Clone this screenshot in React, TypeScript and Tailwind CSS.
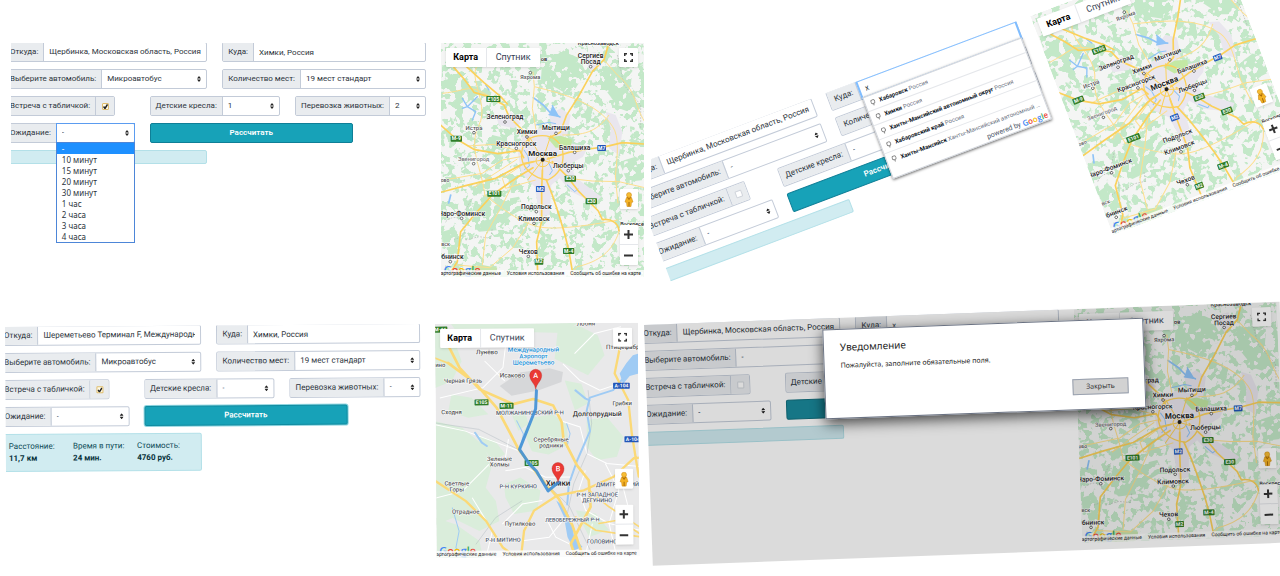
import React from 'react';

interface Trip {
  from: string;
  to: string;
  car: string;
  seats: string;
  withSign: boolean;
  childSeats: string;
  pets: string;
  waiting: string;
}

interface Quote {
  label: string;
  value: string;
}

interface MapLabel {
  text: string;
  x: number;
  y: number;
  size?: number;
  color?: string;
  bold?: boolean;
  dot?: number;
}

interface Shield {
  text: string;
  x: number;
  y: number;
  blue?: boolean;
}

const WAITING_OPTIONS = ['-', '10 минут', '15 минут', '20 минут', '30 минут', '1 час', '2 часа', '3 часа', '4 часа'];

const SUGGESTIONS = [
  { main: 'Хабаровск', rest: 'Россия' },
  { main: 'Химки', rest: 'Россия' },
  { main: 'Ханты-Мансийский автономный округ', rest: 'Россия' },
  { main: 'Хабаровский край', rest: 'Россия' },
  { main: 'Ханты-Мансийск', rest: 'Ханты-Мансийский автономный округ, Россия' },
];

const QUOTE: Quote[] = [
  { label: 'Расстояние:', value: '11,7 км' },
  { label: 'Время в пути:', value: '24 мин.' },
  { label: 'Стоимость:', value: '4760 руб.' },
];

const EMPTY_TRIP: Trip = {
  from: 'Щербинка, Московская область, Россия',
  to: 'х',
  car: '-',
  seats: '-',
  withSign: false,
  childSeats: '-',
  pets: '-',
  waiting: '-',
};

const REGION_LABELS: MapLabel[] = [
  { text: 'Краснозаводск', x: 488, y: 31, size: 17 },
  { text: 'Сергиев', x: 465, y: 69 },
  { text: 'Посад', x: 465, y: 88, dot: 95 },
  { text: 'ов', x: 325, y: 79, size: 17 },
  { text: 'Яхрома', x: 284, y: 131, size: 17, color: '#555', dot: 113 },
  { text: 'Зеленоград', x: 208, y: 252, dot: 261 },
  { text: 'Истра', x: 115, y: 286, size: 18, color: '#555', dot: 293 },
  { text: 'Химки', x: 274, y: 297, dot: 306 },
  { text: 'Мытищи', x: 361, y: 285, dot: 295 },
  { text: 'Красногорск', x: 242, y: 332, dot: 340 },
  { text: 'Балашиха', x: 417, y: 344, dot: 352 },
  { text: 'Москва', x: 321, y: 363, size: 24, bold: true },
  { text: 'Звенигород', x: 114, y: 379, size: 17, color: '#777', dot: 386 },
  { text: 'Люберцы', x: 398, y: 399, dot: 407 },
  { text: 'ово', x: 28, y: 441, size: 15, color: '#555' },
  { text: 'Наро-Фоминск', x: 78, y: 542, dot: 550 },
  { text: 'Подольск', x: 302, y: 523, dot: 530 },
  { text: 'Климовск', x: 295, y: 558, dot: 565 },
  { text: 'Воскресенск', x: 602, y: 573, size: 16 },
  { text: 'вск', x: 30, y: 633, size: 16, color: '#555' },
  { text: 'Обнинск', x: 44, y: 672, dot: 680 },
  { text: 'Чехов', x: 278, y: 656, dot: 664 },
];

const REGION_SHIELDS: Shield[] = [
  { text: 'E105', x: 173, y: 192 },
  { text: 'М-9', x: 62, y: 311 },
  { text: 'М7', x: 498, y: 339, blue: true },
  { text: 'E30', x: 404, y: 431 },
  { text: 'М2', x: 314, y: 462, blue: true },
  { text: 'E101', x: 176, y: 476 },
  { text: 'E30', x: 467, y: 499 },
  { text: 'М-4', x: 399, y: 648 },
  { text: 'М2', x: 310, y: 680 },
];

const ROUTE_LABELS: MapLabel[] = [
  { text: 'Лобня', x: 465, y: 46, size: 19, color: '#555' },
  { text: 'Птицефабр', x: 575, y: 117, size: 19, color: '#555' },
  { text: 'Лунёво', x: 167, y: 130, size: 19, color: '#555' },
  { text: 'Международный', x: 307, y: 123, size: 19, color: '#1a8fd6' },
  { text: 'Аэропорт', x: 307, y: 143, size: 19, color: '#1a8fd6' },
  { text: 'Шереметьево', x: 307, y: 162, size: 19, color: '#1a8fd6' },
  { text: 'ино', x: 27, y: 167, size: 18, color: '#555' },
  { text: 'Исаково', x: 243, y: 200, size: 19, color: '#555' },
  { text: 'Черная Грязь', x: 95, y: 215, size: 18, color: '#555' },
  { text: 'Сходня', x: 60, y: 309, size: 18, color: '#555' },
  { text: 'Грибки', x: 572, y: 286, size: 18, color: '#555' },
  { text: 'МОЛЖАНИНОВСКИЙ Р-Н', x: 295, y: 312, size: 17, color: '#4a5568' },
  { text: 'Долгопрудный', x: 497, y: 318, size: 21, color: '#333' },
  { text: 'Серебряные', x: 358, y: 393, size: 18, color: '#555' },
  { text: 'родники', x: 358, y: 411, size: 18, color: '#555' },
  { text: 'Зеленые', x: 203, y: 450, size: 18, color: '#555' },
  { text: 'Холмы', x: 203, y: 467, size: 18, color: '#555' },
  { text: 'Светлые', x: 74, y: 523, size: 18, color: '#555' },
  { text: 'Горы', x: 74, y: 541, size: 18, color: '#555' },
  { text: 'Р-Н КУРКИНО', x: 258, y: 533, size: 17, color: '#4a5568' },
  { text: 'Химки', x: 378, y: 526, size: 24, color: '#222' },
  { text: 'ДМИТРОВСКИЙ', x: 556, y: 529, size: 17, color: '#4a5568' },
  { text: 'Р-Н ЗАПАДНОЕ', x: 495, y: 559, size: 17, color: '#4a5568' },
  { text: 'ДЕГУНИНО', x: 495, y: 576, size: 17, color: '#4a5568' },
  { text: 'Отрадное', x: 100, y: 608, size: 18, color: '#555' },
  { text: 'Путилково', x: 263, y: 645, size: 18, color: '#555' },
  { text: 'ЛЕВОБЕРЕЖНЫЙ Р-Н', x: 420, y: 634, size: 16, color: '#4a5568' },
  { text: 'Р-Н МИТИНО', x: 212, y: 693, size: 17, color: '#4a5568' },
  { text: 'ГОЛОВИНСКИЙ', x: 526, y: 700, size: 17, color: '#4a5568' },
];

const ROUTE_SHIELDS: Shield[] = [
  { text: 'М-11', x: 28, y: 55 },
  { text: 'E105', x: 150, y: 274 },
  { text: 'М-11', x: 225, y: 285 },
  { text: 'E105', x: 299, y: 457 },
  { text: 'А-104', x: 570, y: 227, blue: true },
  { text: 'А-104', x: 603, y: 388, blue: true },
];

const MapTexts: React.FC<{ labels: MapLabel[]; shields: Shield[] }> = ({ labels, shields }) => (
  <g fontFamily="Roboto, sans-serif" textAnchor="middle">
    {shields.map((s) => {
      const width = s.text.length * 8 + 10;
      return (
        <g key={`${s.text}-${s.x}`}>
          <rect x={s.x - width / 2} y={s.y - 9} width={width} height={18} rx={2} fill={s.blue ? '#2155b8' : '#2e7d28'} />
          <text x={s.x} y={s.y + 5} fontSize={15} fontWeight={700} fill="#fff">{s.text}</text>
        </g>
      );
    })}
    {labels.map((l) => (
      <g key={`${l.text}-${l.x}`}>
        {l.dot && <circle cx={l.x} cy={l.dot} r={4} fill="#fff" stroke="#333" strokeWidth={2} />}
        <text
          x={l.x}
          y={l.y}
          fontSize={l.size ?? 20}
          fontWeight={l.bold ? 700 : 500}
          fill={l.color ?? '#222'}
          stroke="#fff"
          strokeWidth={3}
          paintOrder="stroke"
        >
          {l.text}
        </text>
      </g>
    ))}
  </g>
);

const RegionMap: React.FC<{ id: string }> = ({ id }) => (
  <svg className="block w-full h-full" viewBox="15 24 612 702" preserveAspectRatio="xMidYMid slice" role="img" aria-label="Карта Московской области">
    <defs>
      <filter id={`${id}-forest`} x="0" y="0" width="100%" height="100%" colorInterpolationFilters="sRGB">
        <feTurbulence type="fractalNoise" baseFrequency="0.036" numOctaves="3" seed="4" />
        <feColorMatrix values="0 0 0 0 0.765  0 0 0 0 0.91  0 0 0 0 0.785  24 0 0 0 -12" />
      </filter>
      <filter id={`${id}-clearing`} x="0" y="0" width="100%" height="100%" colorInterpolationFilters="sRGB">
        <feTurbulence type="fractalNoise" baseFrequency="0.05" numOctaves="2" seed="9" />
        <feColorMatrix values="0 0 0 0 0.957  0 0 0 0 0.96  0 0 0 0 0.957  24 0 0 0 -14" />
      </filter>
    </defs>
    <rect x="15" y="24" width="612" height="702" fill="#f4f5f4" />
    <rect x="15" y="24" width="612" height="702" filter={`url(#${id}-forest)`} />

    <g fill="#c3e8c8">
      <path d="M20 90l40 10 35 40 45 30-5 40-30-15-25 20-30-25-35 5z" />
      <path d="M320 70l60-25 50 25 20 40-30 50-30 15-35-20-40-10z" />
      <path d="M480 120l60-30 50 15-5 50 35 40-30 40-40-15-40-55-30-10z" />
      <path d="M120 490l40-15 40 20 50-10 15 35-45 25-30 40-60 5-30-30z" />
      <path d="M20 590l35-10 25 30-10 50-50-20z" />
      <path d="M550 380l50-15 25 20v50l-50 5z" />
      <path d="M170 300l40 10 15 30-35 25-40-15z" />
    </g>
    <rect x="15" y="24" width="612" height="702" filter={`url(#${id}-clearing)`} />
    <g fill="#e9e6ee">
      <path d="M262 300l50-20 60 5 30 40 55 10-15 30-35 20 10 40 80 60-20 20-70-35-35-40-25 20-5 90-30 5-15-90-40-40-10-60z" />
      <path d="M340 240l35-20 30 20-10 60-40 5z" />
      <path d="M510 230l30 10 20 50-10 70-30-20 5-60z" />
      <path d="M440 60l40-10 10 40-25 20z" />
      <path d="M180 240l50-5 25 30-20 15-45-10z" />
    </g>
    <path d="M335 308l40-6 35 12-5 22-45 2z" fill="#c3e8a4" />
    <path d="M60 708l80-18 45 8-10 28H60z" fill="#c9e6b0" />

    <g fill="none" stroke="#8ec3f7" strokeLinecap="round" strokeLinejoin="round">
      <path d="M293 188l30 22 20 22 30 14" strokeWidth={5} />
      <path d="M350 212l18 32-28-5" strokeWidth={4} fill="#8ec3f7" />
      <path d="M80 190l15 25 25 15-10 25M125 185l-30 30-15 5M150 150l10 15" strokeWidth={4} />
      <path d="M300 270l40-8 20 4M265 345l12 18 4 30-14 10M340 385l10 22-8 12M395 450l22 20 10-8" strokeWidth={3} />
      <path d="M45 480l-6 24" strokeWidth={5} />
    </g>
    <path d="M30 560c20-20 45-15 55 8s-5 40-30 45M90 615l40-10 35 5 5-30M110 490l-25 40M545 60l20 90 50 60v70" fill="none" stroke="#b5bab5" strokeWidth={2} strokeDasharray="5 4" />

    <g fill="none" stroke="#fddf8e" strokeWidth={3} strokeLinejoin="round">
      <path d="M292 110l4 45-6 65 12 70M296 155c90 22 190 50 235 120 20 30 15 80 8 150l8 80M20 175c90-10 70-30 140 8M140 80c-60 30 25 120-10 190s10 130 18 215" />
      <path d="M148 480c60 50 120 90 170 97s140-5 228-22M395 430l75 8 80 2 77 18M545 120l-40-45 10-40M545 120c60 50 50 90 82 140M255 365l-55 10-60 40-125 22M255 350l-80-22-80 5M245 372l-70 45-60 40" />
      <path d="M550 590c-20 60-60 90-125 105l-20 20M240 430l-40 80-50 90-10 90M62 690l100 8 70-60 50-80M380 300c60 0 100-5 140-60M260 390l-60 40 10 30 90-25" />
    </g>
    <g fill="none" stroke="#fbd15b" strokeWidth={5} strokeLinejoin="round" strokeLinecap="round">
      <path d="M55 98l30 34 30 40 45 13 45 25 15 35 45 45 15 28M85 88l60 55 50 42 20 22" />
      <path d="M15 270l47 42 55 32 70 12 65-10 12 22M520 24l-15 50-35 36-40 72-38 60-18 50-30 15" />
      <path d="M335 372l65-20 60-10 50-7 50-12 67 4M350 380l45 45 35 45 58 58 12 26c30-4 48 12 50 34" />
      <path d="M332 435l18 45 20 60 18 60 12 50 12 70M320 405l-2 65v90l-15 60 3 100M292 398l-52 32-70 50-50 55-45 55-10 90-25 40M15 472l75-20 90-22 75-40 40-10" />
    </g>
    <path d="M258 352c5-35 30-50 62-50s60 20 62 55-10 60-45 78c-45-5-85-40-79-83z" fill="none" stroke="#fbd15b" strokeWidth={4} />
    <g fill="none" stroke="#fbd15b" strokeWidth={3}>
      <ellipse cx="321" cy="377" rx="20" ry="18" />
      <path d="M321 375l-40-70M321 375l25-75M321 375l-60 10M321 375l-45 60M321 375v60M321 375l60 20" />
    </g>
    <circle cx="321" cy="374" r="6" fill="#222" />
    <MapTexts labels={REGION_LABELS} shields={REGION_SHIELDS} />
  </svg>
);

const RouteMarker: React.FC<{ x: number; y: number; letter: string }> = ({ x, y, letter }) => (
  <g>
    <path d={`M${x} ${y}c-2-18-18-24-18-42a18 18 0 0 1 36 0c0 18-16 24-18 42z`} fill="#ea3a34" stroke="#b3221d" strokeWidth={1} />
    <text x={x} y={y - 34} textAnchor="middle" fontFamily="Roboto, sans-serif" fontSize={22} fontWeight={500} fill="#fff">{letter}</text>
  </g>
);

const RouteMap: React.FC = () => (
  <svg className="block w-full h-full" viewBox="11 38 612 702" preserveAspectRatio="xMidYMid slice" role="img" aria-label="Маршрут до Химок">
    <rect x="11" y="38" width="620" height="702" fill="#e9e9ea" />
    <g fill="#daeddb">
      <path d="M11 60l60 30 20 60-30 60-50 20zM60 38h380l-40 30-150-5-60 20-90 10z" />
      <path d="M11 330l80 20 60 50 30 60-20 70 30 40 10 60-60 30-80-40-50 20zM130 370l60 20 30 40-40 20z" />
      <path d="M380 60l60-15 60 30 20 60-50 60-40-20-60-30z" />
      <path d="M275 360l30-40 60-8 40 30 5 60-60 30-50-10z" />
      <path d="M215 520l50-20 60 40-10 60-70 10-25-50zM465 330l60-10 50 60-20 60-60 10-30-40z" />
      <path d="M60 250l60 10 50 50-60 10-60-20zM11 620l60 20 70 50 10 50H11zM400 210l50 10 20 60-40 20z" />
      <path d="M430 600l60 10 40 50-60 20zM240 310l40-10 10 40-30 20z" />
    </g>
    <path d="M205 225l60-40 90-12 40 12-5 30-70 25-80 15z" fill="#d6d7d9" />
    <g fill="none" stroke="#fff" strokeWidth={3}>
      <path d="M11 340l90 20 160 60M225 90l-10 80-60 60-130 30M160 150l60 60M395 160l50 50 60 30 60-20M385 330l60 20 20 80 60 30 100 10" />
      <path d="M220 480l60-10 60 30 80 0M210 640l60-60 60-10M340 620l30 60 60 30M460 480l-20 60 20 60 70 40 90 20M520 460l40 80-30 100 20 90M11 560l80-20 80-80M120 560l60 100-20 80" />
      <path d="M430 130l60-60 80-20M230 385l-10 60M270 690l80-10 50-60M480 640l-20 90M560 480l30 120" />
    </g>
    <g fill="none" stroke="#9aa6b0" strokeWidth={1}>
      <path d="M11 335l130 20 120 62 60 80 90 90 70 150M470 240l10 100-15 90-40 90-20 90M130 700l60-80 80-50" />
    </g>
    <g fill="#9fcbf4">
      <path d="M565 190l20-30 20-24 20-6v60l-30 8-20 24zM372 570l25 20 20 40 8 50 25 30-25 10-20-40-10-60z" />
    </g>
    <g fill="none" stroke="#9fcbf4" strokeLinecap="round" strokeLinejoin="round">
      <path d="M575 205l-30 35-70 22-10 40 10 60-40 90-25 70-5 60M432 240l30 25 12 5M130 365l20 30 15 10" strokeWidth={6} />
      <path d="M60 590l20 70-10 50 30 30M255 330l20 40-10 45M405 340l10 30-10 40" strokeWidth={3} />
    </g>
    <g fill="none" stroke="#fbd977" strokeLinejoin="round" strokeLinecap="round">
      <path d="M45 90l40 80 60 65 100 45 60-15 60 20 25 50 5 50 40 80 35 45 5 80-60 110 20 60M50 155l80 60 65 75 65 125 60 80 60 70 40 80 30 90" strokeWidth={8} />
      <path d="M11 510l90 60 60 60 50 80 40 30M265 740l10-80 30-60 70-45 80-15 90-40 60-55 20-2M575 70l-25 120 40 80 10 100 20 130" strokeWidth={7} />
      <path d="M470 540l60 50 90 60M500 640l60-10 60 40M11 140l50 20M430 620l60 40 130 20" strokeWidth={5} />
    </g>
    <MapTexts labels={ROUTE_LABELS} shields={ROUTE_SHIELDS} />
    <path d="M315 240l-3 55-49 121 30 45 20 20 35 60 32-26" fill="none" stroke="#3f8fd6" strokeWidth={9} strokeLinejoin="round" strokeLinecap="round" opacity={0.9} />
    <RouteMarker x={313} y={236} letter="A" />
    <RouteMarker x={378} y={516} letter="B" />
  </svg>
);

const GoogleLogo: React.FC<{ className: string }> = ({ className }) => (
  <span className={`font-['Open_Sans',sans-serif] font-semibold ${className}`}>
    <span className="text-[#4285f4]">G</span>
    <span className="text-[#ea4335]">o</span>
    <span className="text-[#fbbc05]">o</span>
    <span className="text-[#4285f4]">g</span>
    <span className="text-[#34a853]">l</span>
    <span className="text-[#ea4335]">e</span>
  </span>
);

const MapView: React.FC<{ children: React.ReactNode }> = ({ children }) => (
  <section className="relative col-span-4 mt-px h-[234px] overflow-hidden font-[Roboto,sans-serif]">
    {children}
    <div className="absolute left-[5px] top-[5px] flex h-[19px] rounded-[1px] bg-white shadow-sm text-[9px] leading-[19px] text-gray-700">
      <button type="button" className="w-[41px] border-r border-gray-200 font-bold text-black">Карта</button>
      <button type="button" className="w-[53px]">Спутник</button>
    </div>
    <button type="button" aria-label="Полноэкранный режим" className="absolute right-[6px] top-[5px] flex size-[19px] items-center justify-center rounded-[1px] bg-white shadow-sm">
      <svg className="size-[9px]" viewBox="0 0 18 18" fill="none" stroke="#333" strokeWidth={3}>
        <path d="M1.500 6V1.500H6M12 1.500h4.500V6M16.500 12v4.500H12M6 16.500H1.500V12" />
      </svg>
    </button>
    <div className="absolute bottom-[12px] right-[6px] flex w-[18px] flex-col gap-4">
      <button type="button" aria-label="Просмотр улиц" className="flex h-5 items-center justify-center rounded-[1px] bg-white shadow-sm">
        <svg className="h-[15px] w-[10px]" viewBox="0 0 20 30">
          <path d="M5 11q5-3 10 0l3 9-3 1-1 8H6l-1-8-3-1z" fill="#f5b324" stroke="#c98510" strokeWidth={1} />
          <circle cx="10" cy="6" r="5" fill="#f7bd35" stroke="#c98510" strokeWidth={1} />
          <path d="M7 11l3 4 3-4M10 20v9" fill="none" stroke="#a86a08" strokeWidth={2} />
        </svg>
      </button>
      <div className="flex flex-col rounded-[1px] bg-white shadow-sm">
        <button type="button" aria-label="Увеличить" className="flex h-5 items-center justify-center border-b border-gray-200">
          <svg className="size-[9px]" viewBox="0 0 9 9" stroke="#333" strokeWidth={2}><path d="M0 4.500h9M4.500 0v9" /></svg>
        </button>
        <button type="button" aria-label="Уменьшить" className="flex h-5 items-center justify-center">
          <svg className="size-[9px]" viewBox="0 0 9 9" stroke="#333" strokeWidth={2}><path d="M0 4.500h9" /></svg>
        </button>
      </div>
    </div>
    <GoogleLogo className="absolute bottom-0 left-[3px] text-[11px] leading-[14px]" />
    <div className="absolute inset-x-0 bottom-0 flex h-[7px] justify-between whitespace-nowrap bg-white/80 text-[5px] leading-[7px] text-[#222]">
      <a href="#data">артографические данные</a>
      <a href="#terms">Условия использования</a>
      <a href="#report" className="pr-[3px]">Сообщить об ошибке на карте</a>
    </div>
  </section>
);

const Group: React.FC<{ id: string; label: string; className?: string; children: React.ReactNode }> = ({ id, label, className = '', children }) => (
  <div className={`relative flex h-5 rounded-[2px] border border-[#c3cbd8] bg-white ${className}`}>
    <label htmlFor={id} className="shrink-0 whitespace-nowrap border-r border-[#c3cbd8] bg-[#e9ecef] px-[5px]">{label}</label>
    {children}
  </div>
);

const Choice: React.FC<{ id: string; value: string; options?: string[]; open?: boolean }> = ({ id, value, options = [value], open = false }) => (
  <div className={`relative min-w-0 flex-1 ${open ? '-my-px -mx-px border border-[#5b9cf0] leading-[18px]' : ''}`}>
    <select id={id} defaultValue={value} className="block h-full w-full appearance-none bg-transparent px-[5px] outline-none">
      {options.map((option) => <option key={option}>{option}</option>)}
    </select>
    <svg className="pointer-events-none absolute inset-y-0 right-[5px] my-auto h-[6px] w-[4px]" viewBox="0 0 4 6" fill="#222">
      <path d="M0 2.500L2 0l2 2.500zM0 3.500h4L2 6z" />
    </svg>
    {open && (
      <ul role="listbox" className="absolute -inset-x-px top-full z-10 border border-[#4d86d8] bg-white font-['Noto_Sans',sans-serif] leading-[11px]">
        {options.map((option) => (
          <li key={option} role="option" aria-selected={option === value} className={`px-[5px] ${option === value ? 'bg-[#1e90ff] text-white' : ''}`}>{option}</li>
        ))}
      </ul>
    )}
  </div>
);

const Suggestions: React.FC = () => (
  <div className="absolute -inset-x-px top-full z-10 border border-gray-300 bg-white font-[Roboto,sans-serif] text-[6px] shadow-[0_1px_3px_rgba(0,0,0,0.6)]">
    <ul>
      {SUGGESTIONS.map((item) => (
        <li key={item.main} className="flex h-[15px] items-center gap-[4px] border-b border-gray-200 pl-[5px] pr-[3px] last:border-0">
          <svg className="h-[7px] w-[5px] shrink-0" viewBox="0 0 10 14" fill="none" stroke="#888" strokeWidth={2}>
            <path d="M5 13V9M5 9a4 4 0 1 1 0-8 4 4 0 0 1 0 8z" />
          </svg>
          <span className="truncate text-gray-500"><b className="font-bold text-gray-900">{item.main}</b> {item.rest}</span>
        </li>
      ))}
    </ul>
    <p className="flex h-[10px] items-center justify-end gap-[2px] pr-px text-[7px] text-gray-600">
      powered by <GoogleLogo className="text-[8px]" />
    </p>
  </div>
);

interface CalculatorProps {
  id: string;
  trip: Trip;
  quote?: Quote[];
  waitingOpen?: boolean;
  suggesting?: boolean;
  buttonClass?: string;
  map: React.ReactNode;
}

const Calculator: React.FC<CalculatorProps> = ({ id, trip, quote = [], waitingOpen, suggesting, buttonClass = 'bg-[#17a2b8] border-[#0f7f97] text-white', map }) => (
  <div className="-ml-[7px] -mt-px grid grid-cols-12 items-start gap-x-[15px] font-[Roboto,sans-serif] text-[8px] leading-[18px] text-[#2c343c]">
    <form className="col-span-8 grid grid-cols-12 gap-x-[15px] gap-y-[7px]" onSubmit={(e) => e.preventDefault()}>
      <Group id={`${id}-from`} label="Откуда:" className="col-span-6">
        <input id={`${id}-from`} defaultValue={trip.from} className="mr-[5px] min-w-0 flex-1 pl-[5px] outline-none" />
      </Group>
      <Group id={`${id}-to`} label="Куда:" className="col-span-6">
        <div className={`relative min-w-0 flex-1 ${suggesting ? '-my-px -mr-px border-2 border-[#80bdff] leading-[16px]' : ''}`}>
          <input id={`${id}-to`} defaultValue={trip.to} className="block h-full w-full px-[5px] outline-none" />
          {suggesting && <Suggestions />}
        </div>
      </Group>
      <Group id={`${id}-car`} label="Выберите автомобиль:" className="col-span-6">
        <Choice id={`${id}-car`} value={trip.car} />
      </Group>
      <Group id={`${id}-seats`} label="Количество мест:" className="col-span-6">
        <Choice id={`${id}-seats`} value={trip.seats} />
      </Group>
      <div className="col-span-4 flex">
        <Group id={`${id}-sign`} label="Встреча с табличкой:">
          <span className="relative flex w-[18px] items-center justify-center bg-[#e9ecef]">
            <input id={`${id}-sign`} type="checkbox" defaultChecked={trip.withSign} className="peer size-[7px] appearance-none rounded-[1px] border border-gray-300 bg-white checked:border-[#e0bd6c] checked:bg-[#fffbe8]" />
            <svg className="pointer-events-none absolute hidden size-[5px] peer-checked:block" viewBox="0 0 10 10" fill="none" stroke="#222" strokeWidth={3}>
              <path d="M1 5l3 4 5-8" />
            </svg>
          </span>
        </Group>
      </div>
      <Group id={`${id}-child`} label="Детские кресла:" className="col-span-4">
        <Choice id={`${id}-child`} value={trip.childSeats} />
      </Group>
      <Group id={`${id}-pets`} label="Перевозка животных:" className="col-span-4">
        <Choice id={`${id}-pets`} value={trip.pets} />
      </Group>
      <Group id={`${id}-wait`} label="Ожидание:" className="col-span-4">
        <Choice id={`${id}-wait`} value={trip.waiting} options={WAITING_OPTIONS} open={waitingOpen} />
      </Group>
      <button type="submit" className={`col-span-6 h-5 rounded-[2px] border font-semibold ${buttonClass}`}>Рассчитать</button>
      <div className="col-span-6 col-start-1 grid grid-cols-3 rounded-[2px] border border-[#b3e0e8] bg-[#d1ecf1] py-[6px] pl-[9px] leading-3 text-[#0c4a56]">
        {quote.map((q) => (
          <p key={q.label} className="whitespace-nowrap">{q.label}<br /><b className="text-[#06313a]">{q.value}</b></p>
        ))}
      </div>
    </form>
    <MapView>{map}</MapView>
  </div>
);

const NoticeDialog: React.FC = () => (
  <div role="dialog" aria-labelledby="notice-title" className="absolute left-[178px] top-[11px] flex w-[321px] flex-col border border-gray-500 bg-white px-4 pb-[14px] pt-[9px] font-['Noto_Sans',sans-serif] text-[#222] shadow-[0_4px_14px_rgba(0,0,0,0.7)]">
    <h2 id="notice-title" className="text-[10px] leading-4">Уведомление</h2>
    <p className="mt-[5px] text-[7px] leading-3">Пожалуйста, заполните обязательные поля.</p>
    <button type="button" className="mt-4 h-4 w-[56px] self-end border border-gray-400 bg-[#d2d2d2] font-['Open_Sans',sans-serif] text-[7px] leading-[14px]">Закрыть</button>
  </div>
);

export default function App() {
  return (
    <main className="grid h-screen grid-rows-2 overflow-hidden bg-white">
      <div className="grid min-h-0 grid-cols-[651fr_629fr]">
        <section className="min-h-0 min-w-0 overflow-hidden pl-[11px] pr-[7px] pt-[43px]">
          <div className="overflow-hidden">
            <Calculator
              id="open"
              trip={{ ...EMPTY_TRIP, to: 'Химки, Россия', car: 'Микроавтобус', seats: '19 мест стандарт', withSign: true, childSeats: '1', pets: '2' }}
              waitingOpen
              map={<RegionMap id="open" />}
            />
          </div>
        </section>
        <section className="min-h-0 min-w-0 overflow-hidden pt-[168px]">
          <div className="-ml-[23px] mr-[19px] origin-top-left -rotate-[20.7deg] overflow-hidden">
            <Calculator id="search" trip={EMPTY_TRIP} suggesting map={<RegionMap id="search" />} />
          </div>
        </section>
      </div>
      <div className="grid min-h-0 grid-cols-[644fr_636fr]">
        <section className="min-h-0 min-w-0 overflow-hidden pl-[5px] pr-[6px] pt-[39px]">
          <div className="origin-top-left -rotate-[0.4deg] overflow-hidden">
            <Calculator
              id="route"
              trip={{ ...EMPTY_TRIP, from: 'Шереметьево Терминал F, Международный аэропорт', to: 'Химки, Россия', car: 'Микроавтобус', seats: '19 мест стандарт', withSign: true }}
              quote={QUOTE}
              buttonClass="bg-[#17a2b8] border-[#0f8ba0] text-white shadow-[0_0_0_1px_#8fd5e0]"
              map={<RouteMap />}
            />
          </div>
        </section>
        <section className="min-h-0 min-w-0 pt-[37px]">
          <div className="relative origin-top-left -rotate-[2.1deg]">
            <div className="overflow-hidden pb-[7px] pr-[3px]">
              <Calculator id="notice" trip={EMPTY_TRIP} buttonClass="bg-[#1a8a9c] border-[#12707f] text-white" map={<RegionMap id="notice" />} />
            </div>
            <div className="absolute inset-0 bg-black/14" />
            <NoticeDialog />
          </div>
        </section>
      </div>
    </main>
  );
}
